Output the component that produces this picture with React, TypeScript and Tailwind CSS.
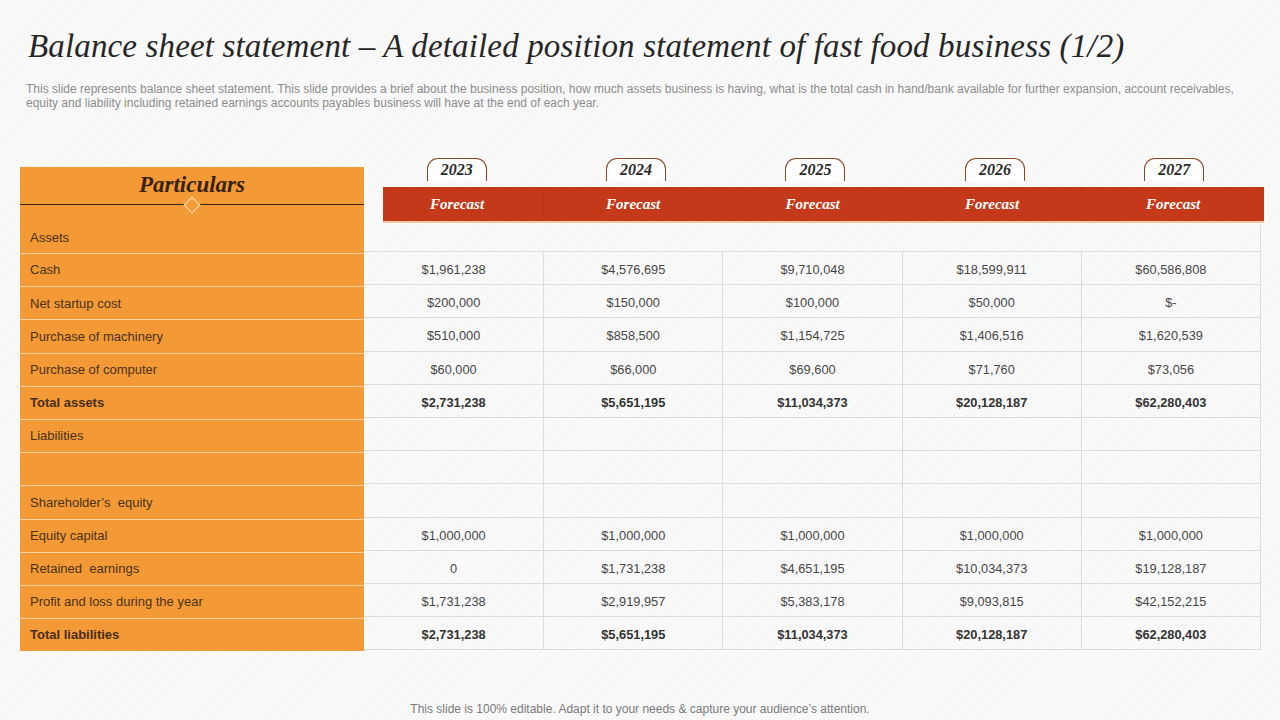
const years = ['2023', '2024', '2025', '2026', '2027'];

type Row = { label: string; values: string[]; bold?: boolean };

const rows: Row[] = [
  { label: 'Cash', values: ['$1,961,238', '$4,576,695', '$9,710,048', '$18,599,911', '$60,586,808'] },
  { label: 'Net startup cost', values: ['$200,000', '$150,000', '$100,000', '$50,000', '$-'] },
  { label: 'Purchase of machinery', values: ['$510,000', '$858,500', '$1,154,725', '$1,406,516', '$1,620,539'] },
  { label: 'Purchase of computer', values: ['$60,000', '$66,000', '$69,600', '$71,760', '$73,056'] },
  { label: 'Total assets', values: ['$2,731,238', '$5,651,195', '$11,034,373', '$20,128,187', '$62,280,403'], bold: true },
  { label: 'Liabilities', values: ['', '', '', '', ''] },
  { label: '', values: ['', '', '', '', ''] },
  { label: 'Shareholder\u2019s  equity', values: ['', '', '', '', ''] },
  { label: 'Equity capital', values: ['$1,000,000', '$1,000,000', '$1,000,000', '$1,000,000', '$1,000,000'] },
  { label: 'Retained  earnings', values: ['0', '$1,731,238', '$4,651,195', '$10,034,373', '$19,128,187'] },
  { label: 'Profit and loss during the year', values: ['$1,731,238', '$2,919,957', '$5,383,178', '$9,093,815', '$42,152,215'] },
  { label: 'Total liabilities', values: ['$2,731,238', '$5,651,195', '$11,034,373', '$20,128,187', '$62,280,403'], bold: true },
];

const sans = "font-['Liberation_Sans',Arial,sans-serif]";
const serif = "font-['Liberation_Serif','Times_New_Roman',serif]";

export default function App() {
  return (
    <div
      className={`w-[1280px] h-[720px] flex flex-col overflow-hidden bg-[repeating-linear-gradient(135deg,#fbfbfb_0px,#fbfbfb_2px,#f4f4f4_2px,#f4f4f4_3px)] ${sans}`}
    >
      {/* Title */}
      <h1
        className={`ml-[28px] mt-[26px] text-[33px] leading-[41px] italic text-[#262626] whitespace-nowrap tracking-[0.15px] ${serif}`}
      >
        Balance sheet statement – A detailed position statement of fast food business (1/2)
      </h1>

      {/* Description */}
      <p className="ml-[26px] mt-[15px] text-[12px] leading-[14px] text-[#8c8c8c] whitespace-nowrap">
        This slide represents balance sheet statement. This slide provides a brief about the business position, how much assets business is having, what is the total cash in hand/bank available for further expansion, account receivables,
        <br />
        equity and liability including retained earnings accounts payables business will have at the end of each year.
      </p>

      {/* Table */}
      <div className="flex items-start mt-[48px]">
        {/* Particulars column */}
        <div className="ml-[20px] mt-[9px] w-[344px] bg-[#f39a36] text-[13px] text-[#4a321c]">
          <div className="relative h-[38px] border-b border-[#3b2616] flex items-center justify-center">
            <span className={`text-[23px] font-bold italic text-[#3a2212] ${serif}`}>Particulars</span>
            <div className="absolute left-[166px] -bottom-[7px] w-[12px] h-[12px] rotate-45 border border-[#fde2bd] bg-[#f39a36]" />
          </div>
          <div className="h-[48px] flex items-end pb-[6px] pl-[10px]">Assets</div>
          {rows.map((r, i) => (
            <div
              key={i}
              className={`h-[33.2px] flex items-center pl-[10px] border-t border-[#f9cf9a] whitespace-pre ${
                r.bold ? 'font-bold text-[#4a2e16]' : ''
              }`}
            >
              {r.label}
            </div>
          ))}
        </div>

        {/* Years area */}
        <div className="w-[900px]">
          <div className="w-[897px] h-[23px] grid grid-cols-5">
            {years.map((y) => (
              <div key={y} className="flex justify-center pl-[6px]">
                <div
                  className={`w-[60px] h-[23px] rounded-t-[11px] border border-b-0 border-[#8a4526] bg-white flex items-center justify-center text-[16px] font-bold italic text-[#2a2a2a] ${serif}`}
                >
                  {y}
                </div>
              </div>
            ))}
          </div>

          <div className="mt-[6px] ml-[19px] w-[881px] h-[36px] bg-[#c4391a] border-b-2 border-[#f6c6a6] grid grid-cols-[160px_179.4px_179.4px_179.4px_1fr]">
            {years.map((y, i) => (
              <div
                key={y}
                className={`flex items-center justify-center text-[15px] font-bold italic text-white ${serif} ${
                  i === 0 ? 'pr-[12px]' : 'border-l border-[#b8341a]'
                }`}
              >
                Forecast
              </div>
            ))}
          </div>

          <div className="w-[897px] border-r border-[#dcdcdc]">
            <div className="h-[29px] border-b border-[#dcdcdc]" />
            {rows.map((r, i) => (
              <div key={i} className="h-[33.2px] grid grid-cols-5 border-b border-[#dcdcdc]">
                {r.values.map((v, j) => (
                  <div
                    key={j}
                    className={`flex items-center justify-center pt-[3px] text-[12.8px] ${
                      j > 0 ? 'border-l border-[#dcdcdc]' : ''
                    } ${r.bold ? 'font-bold text-[#333333]' : 'text-[#474747]'}`}
                  >
                    {v}
                  </div>
                ))}
              </div>
            ))}
          </div>
        </div>
      </div>

      {/* Footer */}
      <p className="mt-auto mb-[3px] text-center text-[12px] leading-[16px] text-[#7a7a7a]">
        This slide is 100% editable. Adapt it to your needs &amp; capture your audience’s attention.
      </p>
    </div>
  );
}
